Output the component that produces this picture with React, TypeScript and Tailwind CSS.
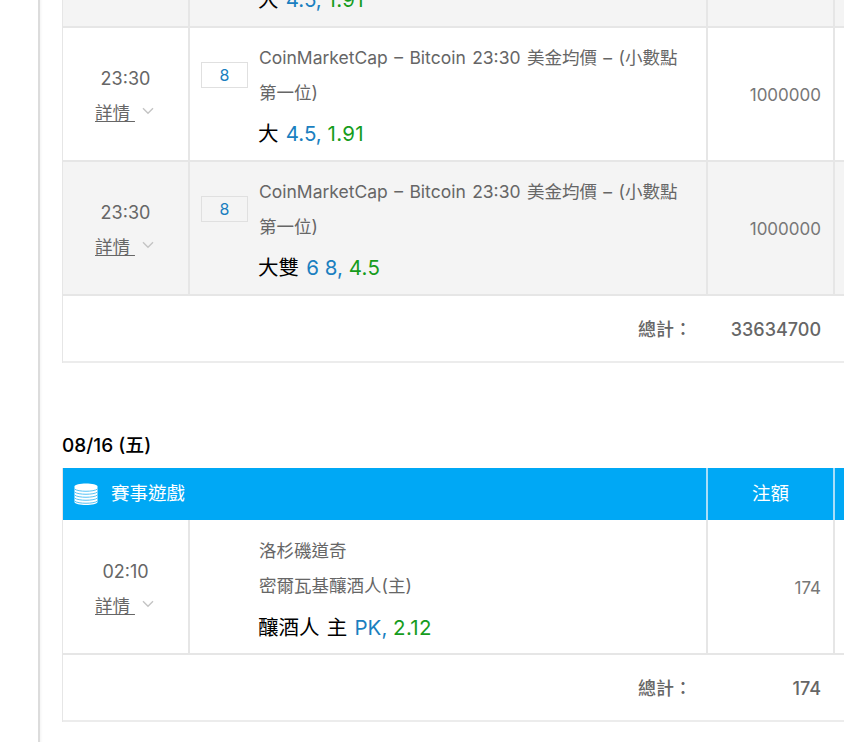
const cjk = { fontFamily: 'Inter, "Noto Sans CJK TC", sans-serif' }

interface BetRow {
  time: string
  badge?: string
  lines: string[]
  pick: string
  nums: string
  odds: string
  amount: string
  shaded?: boolean
  tall?: boolean
}

const title = ['CoinMarketCap – Bitcoin 23:30 美金均價 – (小數點', '第一位)']

function Chevron() {
  return (
    <svg width="12" height="8" viewBox="0 0 12 8" className="ml-[7px] mt-[-4px]" fill="none">
      <path d="M1 1.2 L6 6.2 L11 1.2" stroke="#c4c4c4" strokeWidth="1.4" />
    </svg>
  )
}

function Row({ time, badge, lines, pick, nums, odds, amount, shaded, tall }: BetRow) {
  return (
    <div className={`flex border-b-2 border-[#e6e6e6] ${tall ? 'h-[135px]' : 'h-[134px]'} ${shaded ? 'bg-[#f4f4f4]' : 'bg-white'}`}>
      <div className={`flex w-[127px] shrink-0 flex-col items-center border-r-2 border-[#e6e6e6] ${tall ? 'pt-[39px]' : 'pt-[38px]'}`}>
        <div className="text-[18px] leading-[26px] text-[#666]">{time}</div>
        <div className="mr-[2px] mt-[9px] flex items-center text-[17.5px] leading-[24px] text-[#666]">
          <span className="underline underline-offset-2">詳情&nbsp;</span>
          <Chevron />
        </div>
      </div>
      <div className="flex w-[518px] shrink-0 border-r-2 border-[#e6e6e6]">
        <div className="w-[69px] shrink-0 pl-[11px] pt-[34px]">
          {badge && (
            <div className="flex h-[26px] w-[47px] items-center justify-center border border-[#e0e0e0] text-[16px] text-[#1a7fc0]">
              {badge}
            </div>
          )}
        </div>
        <div className={tall ? 'pt-[13px]' : 'pt-[12px]'}>
          <div className="w-[440px] text-[17.5px] leading-[35px] text-[#666] [word-spacing:1.5px]">
            {lines.map((l) => (
              <div key={l}>{l}</div>
            ))}
          </div>
          <div className={`ml-[-1px] text-[20.5px] leading-[28px] ${tall ? 'mt-[11px]' : 'mt-[10px]'}`}>
            <span className="text-black [word-spacing:1.5px]">{pick} </span>
            <span className="text-[#1a7fc0]">{nums}, </span>
            <span className="text-[#169c1c] tracking-[0.3px]">{odds}</span>
          </div>
        </div>
      </div>
      <div className={`flex w-[127px] shrink-0 items-center justify-end border-r-2 border-[#e6e6e6] pr-[12px] text-[17px] text-[#777] ${tall ? 'pt-[5px]' : 'pt-[3px]'}`}>
        {amount}
      </div>
      <div className="flex-1" />
    </div>
  )
}

function Total({ value }: { value: string }) {
  return (
    <div className="flex h-[67px] border-b-2 border-[#ececec] bg-white pt-[1px] text-[18px] font-medium text-[#666]">
      <div className="flex w-[645px] shrink-0 items-center justify-end pr-[16px]">總計：</div>
      <div className="flex w-[127px] shrink-0 items-center justify-end pr-[14px]">{value}</div>
      <div className="flex-1" />
    </div>
  )
}

function StackIcon() {
  return (
    <svg width="24" height="24" viewBox="0 0 24 24" fill="none">
      <path d="M0.5 4.5 C0.5 0.5 23.5 0.5 23.5 4.5 L23.5 20 C23.5 24 0.5 24 0.5 20 Z" fill="#fff" />
      {[7, 10, 13, 16, 19].map((y) => (
        <path key={y} d={`M0.5 ${y} C4 ${y + 3} 20 ${y + 3} 23.5 ${y}`} stroke="#55c3f6" strokeWidth="1" />
      ))}
    </svg>
  )
}

export default function App() {
  return (
    <div className="h-[742px] w-[844px] overflow-hidden bg-white" style={cjk}>
      <div className="ml-[38px] mt-[-106px] h-[900px] border-l-2 border-[#dcdcdc] pl-[22px] shadow-[inset_3px_0_3px_-2px_rgba(0,0,0,0.05)]">
        <div className="w-[900px] border-l border-[#e6e6e6]">
          <Row time="23:30" badge="8" lines={title} pick="大" nums="4.5" odds="1.91" amount="1000000" shaded />
          <Row time="23:30" badge="8" lines={title} pick="大" nums="4.5" odds="1.91" amount="1000000" />
          <Row time="23:30" badge="8" lines={title} pick="大雙" nums="6 8" odds="4.5" amount="1000000" shaded />
          <Total value="33634700" />
        </div>

        <div className="mt-[71px] h-[34px] text-[19px] font-medium leading-[24px] text-black">08/16 (五)</div>

        <div className="w-[900px] border-l border-[#e6e6e6]">
          <div className="flex h-[52px] bg-[#00a8f5] text-[18.5px] text-white">
            <div className="flex w-[645px] shrink-0 items-center border-r-2 border-[#a8def9] pl-[11px]">
              <StackIcon />
              <span className="ml-[13px]">賽事遊戲</span>
            </div>
            <div className="flex w-[127px] shrink-0 items-center justify-center border-r-2 border-[#a8def9]">注額</div>
            <div className="flex-1" />
          </div>
          <Row time="02:10" lines={['洛杉磯道奇', '密爾瓦基釀酒人(主)']} pick="釀酒人 主" nums="PK" odds="2.12" amount="174" tall />
          <Total value="174" />
        </div>
      </div>
    </div>
  )
}
